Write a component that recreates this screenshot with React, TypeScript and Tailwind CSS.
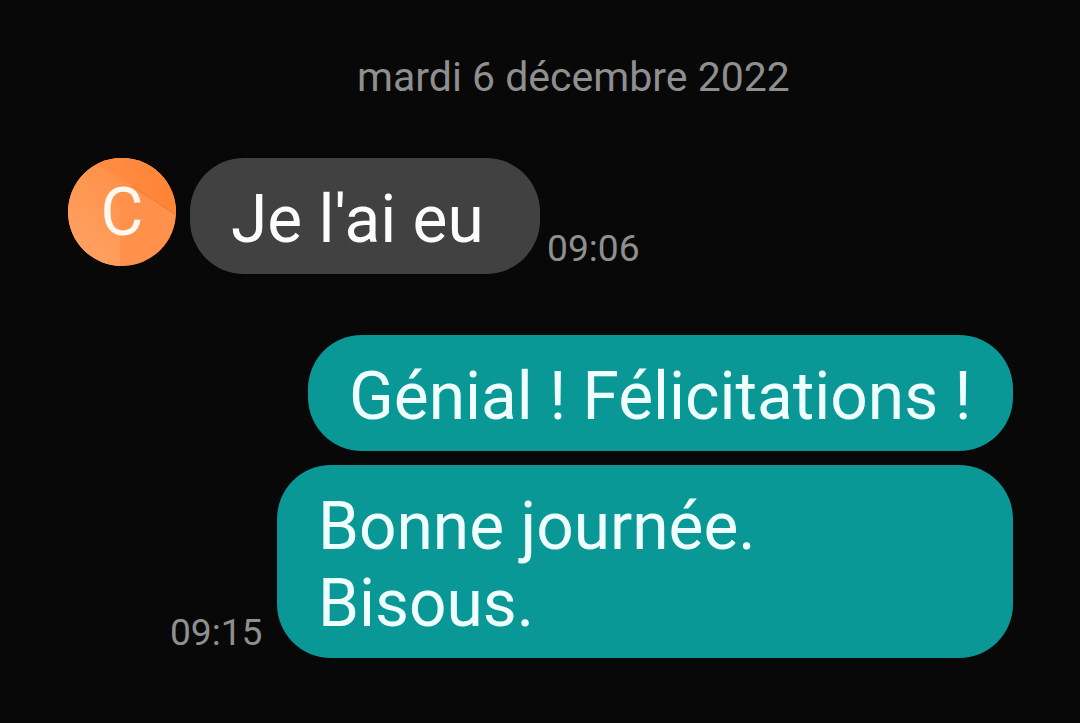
type BubbleProps = {
  className: string;
  children: React.ReactNode;
};

function Bubble({ className, children }: BubbleProps) {
  return (
    <div className={`rounded-[54px] pt-[23px] pl-[41px] text-[65.8px] leading-[77px] whitespace-pre-line ${className}`}>
      {children}
    </div>
  );
}

function Avatar() {
  return (
    <div className="relative h-[108px] w-[108px] overflow-hidden rounded-full">
      <svg viewBox="0 0 108 108" className="h-full w-full" aria-hidden="true">
        <defs>
          <linearGradient id="avatar-left" x1="0.7" y1="0" x2="0.3" y2="1">
            <stop offset="0" stopColor="#ff9049" />
            <stop offset="1" stopColor="#ffa263" />
          </linearGradient>
          <linearGradient id="avatar-top" x1="0" y1="0" x2="1" y2="0">
            <stop offset="0" stopColor="#ff8a40" />
            <stop offset="1" stopColor="#ff8434" />
          </linearGradient>
        </defs>
        <rect width="108" height="108" fill="#ff914c" />
        <path d="M0 0H52V108H0Z" fill="url(#avatar-left)" />
        <path d="M20 0H52V20Z" fill="#ff8b41" />
        <path d="M52 0H108V57L52 20Z" fill="url(#avatar-top)" />
        <path d="M64 28L108 57" stroke="#e97a36" strokeWidth="1" />
      </svg>
      <span className="absolute inset-0 flex items-center justify-center pt-px text-[66px] leading-none text-[#fff8ee]">C</span>
    </div>
  );
}

export default function App() {
  return (
    <main className="h-[723px] w-[1080px] overflow-hidden bg-[#080808] pt-[53px] font-['Roboto',sans-serif]">
      <p className="pl-[357px] text-[41px] leading-[48px] text-[#8f8f8f]">mardi 6 décembre 2022</p>

      <section className="mt-[57px] flex h-[116px] items-start pl-[68px]">
        <Avatar />
        <Bubble className="ml-[14px] h-[116px] w-[350px] bg-[#414141] text-[#fcfcfc]">Je l'ai eu</Bubble>
        <time className="mt-[69px] ml-[7px] text-[37.2px] leading-[42px] text-[#8f8f8f]">09:06</time>
      </section>

      <section className="mt-[61px] flex flex-col items-end gap-[14px] pr-[67px]">
        <Bubble className="h-[116px] w-[705px] bg-[#0a9896] text-[#effeff]">Génial ! Félicitations !</Bubble>
        <div className="flex items-end">
          <time className="mr-[14.5px] mb-[5px] text-[37.2px] leading-[42px] text-[#8f8f8f]">09:15</time>
          <Bubble className="h-[193px] w-[736px] bg-[#0a9896] text-[#effeff]">{'Bonne journée.\nBisous.'}</Bubble>
        </div>
      </section>
    </main>
  );
}
